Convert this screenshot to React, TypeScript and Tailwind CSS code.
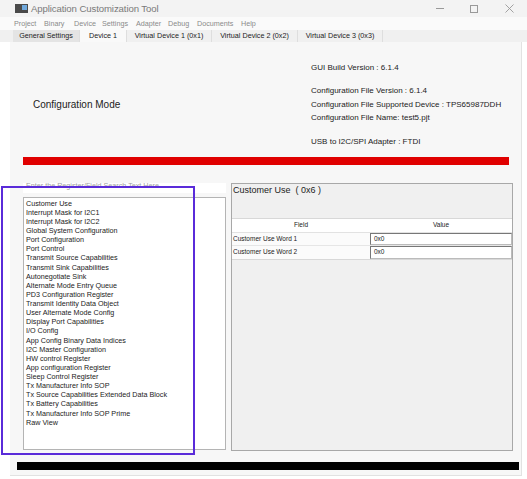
import React from "react";

const items = [
  "Customer Use",
  "Interrupt Mask for I2C1",
  "Interrupt Mask for I2C2",
  "Global System Configuration",
  "Port Configuration",
  "Port Control",
  "Transmit Source Capabilities",
  "Transmit Sink Capabilities",
  "Autonegotiate Sink",
  "Alternate Mode Entry Queue",
  "PD3 Configuration Register",
  "Transmit Identity Data Object",
  "User Alternate Mode Config",
  "Display Port Capabilities",
  "I/O Config",
  "App Config Binary Data Indices",
  "I2C Master Configuration",
  "HW control Register",
  "App configuration Register",
  "Sleep Control Register",
  "Tx Manufacturer Info SOP",
  "Tx Source Capabilities Extended Data Block",
  "Tx Battery Capabilities",
  "Tx Manufacturer Info SOP Prime",
  "Raw View",
];

const menus: [string, number][] = [
  ["Project", 30],
  ["Binary", 30],
  ["Device", 28],
  ["Settings", 34],
  ["Adapter", 32],
  ["Debug", 29],
  ["Documents", 44],
  ["Help", 30],
];

const tabs: [string, number, boolean][] = [
  ["General Settings", 67, false],
  ["Device 1", 47, true],
  ["Virtual Device 1 (0x1)", 85, false],
  ["Virtual Device 2 (0x2)", 86, false],
  ["Virtual Device 3 (0x3)", 85, false],
];

export default function App() {
  return (
    <div
      className="relative w-[527px] h-[479px] bg-white overflow-hidden text-[#222]"
      style={{ fontFamily: '"Liberation Sans", Arial, sans-serif' }}
    >
      {/* Title bar */}
      <div className="h-[17px] bg-[#f3f3f3] flex items-center">
        <div className="ml-[15px] w-[13px] h-[9px] bg-[#4a4a4a] flex items-start justify-end p-[1px]">
          <div className="w-[5px] h-[5px] bg-[#6fa8dc]" />
        </div>
        <div className="ml-[3px] text-[9.6px] text-[#7a7a7a] leading-none tracking-[-0.1px]">
          Application Customization Tool
        </div>
        <div className="ml-auto flex items-center h-full">
          <div className="w-[8px] h-[1px] bg-[#999] mr-[26px]" />
          <div className="w-[8px] h-[8px] border border-[#999] mr-[27px]" />
          <svg width="9" height="9" viewBox="0 0 9 9" className="mr-[13px]">
            <path d="M0.5 0.5 L8.5 8.5 M8.5 0.5 L0.5 8.5" stroke="#999" strokeWidth="0.9" />
          </svg>
        </div>
      </div>

      {/* Menu bar */}
      <div className="h-[13px] bg-[#fafafa] flex items-center pl-[14px]">
        {menus.map(([m, w]) => (
          <div key={m} className="text-[7.2px] text-[#8a8a8a] leading-none" style={{ width: w }}>
            {m}
          </div>
        ))}
      </div>

      {/* Tabs */}
      <div className="h-[12px] bg-[#f0f0f0] flex pl-[13px]">
        {tabs.map(([t, w, sel]) => (
          <div
            key={t}
            className={
              "h-full flex items-center justify-center text-[7.2px] leading-none border-r border-[#dedede] " +
              (sel ? "bg-[#f9f9f9]" : t === "General Settings" ? "bg-[#e4e4e4]" : "bg-[#f0f0f0]")
            }
            style={{ width: w }}
          >
            {t}
          </div>
        ))}
      </div>

      {/* Content frame */}
      <div className="ml-[10px] w-[512px] h-[434px] bg-[#f7f7f7] border-b border-r border-[#e2e2e2] flex flex-col">
        {/* Header info */}
        <div className="flex items-center pt-[19px]">
          <div className="w-[301px] pl-[23px] text-[10px] leading-none">Configuration Mode</div>
          <div className="text-[8px] leading-[13.5px] text-[#222]">
            <div>GUI Build Version : 6.1.4</div>
            <div className="h-[9.5px]" />
            <div>Configuration File Version : 6.1.4</div>
            <div>Configuration File Supported Device : TPS65987DDH</div>
            <div>Configuration File Name: test5.pjt</div>
            <div className="h-[10.2px]" />
            <div>USB to I2C/SPI Adapter : FTDI</div>
          </div>
        </div>

        {/* Red bar */}
        <div className="ml-[13px] w-[486px] h-[8px] bg-[#e00000] mt-[8.5px]" />

        {/* Panels */}
        <div className="flex mt-[18px] ml-[13px]">
          <div className="w-[203px] flex flex-col">
            <div className="h-[10px] bg-white overflow-hidden relative">
              <div className="absolute left-[3px] top-[-2px] text-[7.2px] leading-[9px] text-[#a0a0a0] whitespace-nowrap">
                Enter the Register/Field Search Text Here
              </div>
            </div>
            <div className="mt-[4px] h-[253px] bg-white border border-[#b4b4b4] pl-[2px] pt-[1px]">
              {items.map((it) => (
                <div key={it} className="text-[7.2px] leading-[9.125px] whitespace-nowrap">
                  {it}
                </div>
              ))}
            </div>
          </div>

          <div className="ml-[5px] w-[282px] h-[268px] bg-[#f0f0f0] border border-[#a8a8a8] flex flex-col">
            <div className="text-[9px] leading-none pl-[1px] pt-[2px]">Customer Use&nbsp;&nbsp;( 0x6 )</div>
            <div className="mt-[23px] bg-white border-t border-b border-[#d8d8d8] text-[6.5px]">
              <div className="flex h-[14px] items-center border-b border-[#e2e2e2]">
                <div className="w-[138px] text-center">Field</div>
                <div className="flex-1 text-center">Value</div>
              </div>
              <div className="flex h-[13px] items-center border-b border-[#e6e6e6]">
                <div className="w-[138px] pl-[1px] bg-[#fbfbfb] h-full flex items-center">Customer Use Word 1</div>
                <div className="flex-1 h-full border border-t-[#777] border-l-[#777] border-b-[#bbb] border-r-[#bbb] pl-[3px] flex items-center">0x0</div>
              </div>
              <div className="flex h-[13px] items-center">
                <div className="w-[138px] pl-[1px] bg-[#fbfbfb] h-full flex items-center">Customer Use Word 2</div>
                <div className="flex-1 h-full border border-t-[#777] border-l-[#777] border-b-[#bbb] border-r-[#bbb] pl-[3px] flex items-center">0x0</div>
              </div>
            </div>
          </div>
        </div>

        {/* Black bar */}
        <div className="ml-[7px] w-[502px] h-[8px] bg-black mt-[11px]" />
      </div>

      {/* Purple annotation rectangle */}
      <div className="absolute left-[1px] top-[186px] w-[194px] h-[269px] border-2 border-[#5a2bd9]" />
    </div>
  );
}
